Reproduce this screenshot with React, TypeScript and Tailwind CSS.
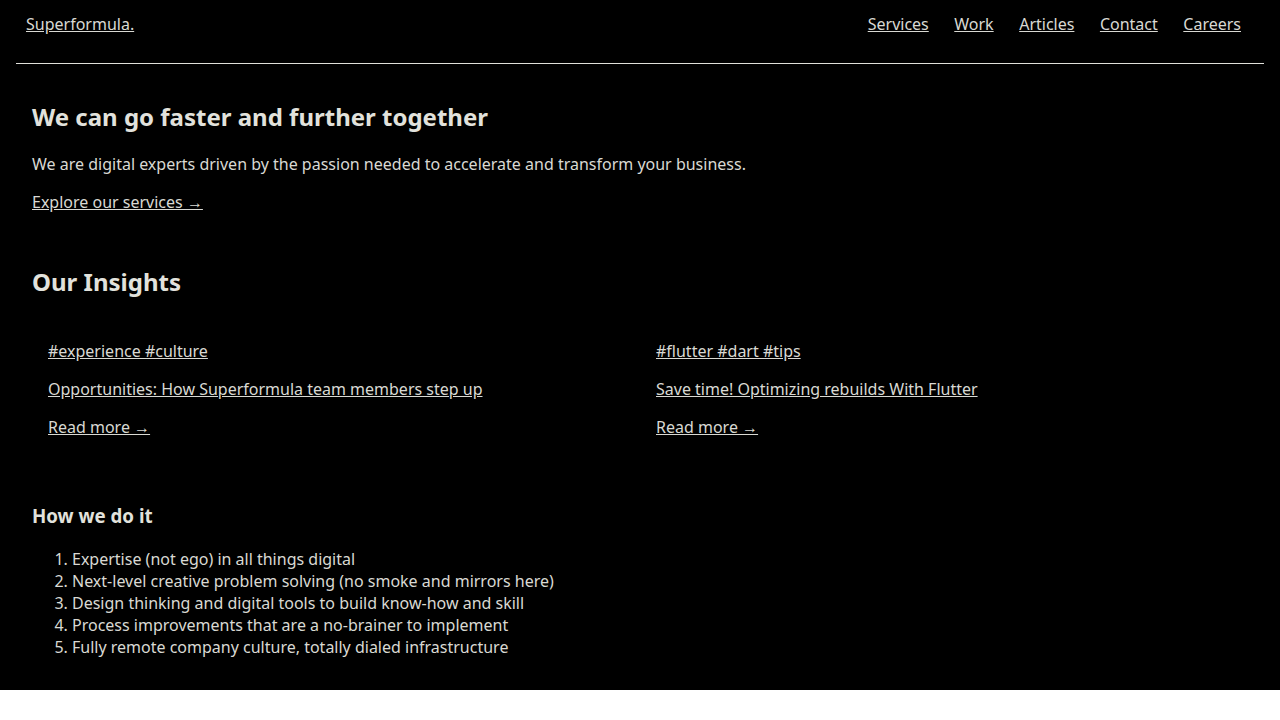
import React from "react";

const insights = [
  {
    tags: "#experience #culture",
    title: "Opportunities: How Superformula team members step up",
  },
  {
    tags: "#flutter #dart #tips",
    title: "Save time! Optimizing rebuilds With Flutter",
  },
];

const steps = [
  "Expertise (not ego) in all things digital",
  "Next-level creative problem solving (no smoke and mirrors here)",
  "Design thinking and digital tools to build know-how and skill",
  "Process improvements that are a no-brainer to implement",
  "Fully remote company culture, totally dialed infrastructure",
];

export default function App() {
  return (
    <div
      className="bg-black text-[#d9d9d3] text-[16px]"
      style={{ fontFamily: '"Noto Sans", "Open Sans", sans-serif' }}
    >
      <header className="mx-4 h-16 border-b border-[#e0e0da] flex items-start justify-between pl-[10px] pr-[23px] pt-[13px]">
        <a href="#" className="underline leading-[22px]">
          Superformula.
        </a>
        <nav className="flex gap-[25.5px] leading-[22px]">
          <a href="#" className="underline">Services</a>
          <a href="#" className="underline">Work</a>
          <a href="#" className="underline">Articles</a>
          <a href="#" className="underline">Contact</a>
          <a href="#" className="underline">Careers</a>
        </nav>
      </header>

      <main className="px-8 pb-4 pt-[36px] flex flex-col">
        <section className="flex flex-col">
          <h2 className="text-[24px] font-bold leading-[33px] text-[#e2e2dc]">
            We can go faster and further together
          </h2>
          <p className="mt-[20px] leading-[22px]">
            We are digital experts driven by the passion needed to accelerate and transform your business.
          </p>
          <p className="mt-[16px] leading-[22px]">
            <a href="#" className="underline">
              Explore our services →
            </a>
          </p>
        </section>

        <section className="flex flex-col mt-[52px]">
          <h2 className="text-[24px] font-bold leading-[33px] text-[#e2e2dc]">Our Insights</h2>
          <div className="grid grid-cols-2 mt-[42px]">
            {insights.map((it) => (
              <div key={it.tags} className="px-4 flex flex-col gap-[16px] leading-[22px]">
                <a href="#" className="underline self-start">{it.tags}</a>
                <a href="#" className="underline self-start">{it.title}</a>
                <a href="#" className="underline self-start">
                  Read more →
                </a>
              </div>
            ))}
          </div>
        </section>

        <section className="flex flex-col mt-[65px]">
          <h3 className="text-[18.72px] font-bold leading-[25px] text-[#e2e2dc]">How we do it</h3>
          <ol className="mt-[20px] mb-[16px] pl-[40px] list-decimal leading-[22px]">
            {steps.map((s) => (
              <li key={s}>{s}</li>
            ))}
          </ol>
        </section>
      </main>
    </div>
  );
}
